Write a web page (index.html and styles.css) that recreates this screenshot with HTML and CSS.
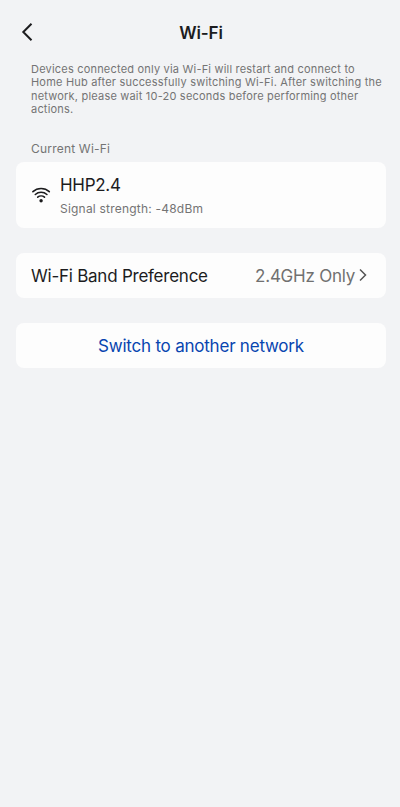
FILE: index.html
```html
<!DOCTYPE html>
<html lang="en">
<head>
<meta charset="utf-8">
<title>Wi-Fi</title>
<link rel="stylesheet" href="styles.css">
</head>
<body>
<header class="bar">
  <svg class="back" width="14" height="20" viewBox="0 0 14 20"><path d="M10.5 1.8 2.3 10l8.2 8.2"/></svg>
  <h1 class="title">Wi-Fi</h1>
</header>
<main class="content">
  <p class="intro"><span>Devices connected only via Wi-Fi will restart and connect to</span><br><span>Home Hub after successfully switching Wi-Fi. After switching the</span><br><span>network, please wait 10-20 seconds before performing other</span><br><span>actions.</span></p>
  <h2 class="label">Current Wi-Fi</h2>
  <section class="card network">
    <svg class="wifi" width="20" height="16" viewBox="0 0 20 16"><path d="M1.9 4.7C6.5.4 13.7.4 18.3 4.7M4.3 7.5c3.3-3 8.3-3 11.6 0M6.7 10.2c1.9-1.7 4.9-1.7 6.8 0"/><circle cx="10.1" cy="13.7" r="1.7"/></svg>
    <div class="info">
      <div class="name">HHP2.4</div>
      <div class="signal">Signal strength: -48dBm</div>
    </div>
  </section>
  <section class="card row">
    <span class="row-label">Wi-Fi Band Preference</span>
    <span class="value">2.4GHz Only</span>
    <svg class="chevron" width="8" height="14" viewBox="0 0 8 14"><path d="m1 1.5 5.5 5.5L1 12.5"/></svg>
  </section>
  <button class="card switch">Switch to another network</button>
</main>
</body>
</html>
```
FILE: styles.css
```css
* { box-sizing: border-box; }
body {
  margin: 0;
  min-height: 807px;
  background: #f2f3f5;
  color: #1c1c1e;
  font-family: Inter, "Liberation Sans", sans-serif;
}
svg { fill: none; stroke: currentColor; flex: none; }
.bar {
  display: grid;
  grid-template-columns: 40px 1fr 40px;
  align-items: center;
  height: 62px;
  padding-top: 2px;
}
.back { margin-left: 21px; stroke-width: 2; }
.title { margin: 2px 0 0 2px; text-align: center; font-size: 17px; font-weight: 570; letter-spacing: -0.1px; }
.content { padding: 0 14px 0 16px; }
.intro { margin: 0 0 0 15px; padding-top: 1px; color: #747474; font-size: 11px; line-height: 13.3px; white-space: nowrap; letter-spacing: 0.2px; }
.label { margin: 25px 0 5px 15px; color: #747474; font-size: 12px; line-height: 16px; font-weight: 400; letter-spacing: 0.2px; }
.card { display: flex; width: 370px; background: #fdfdfd; border-radius: 8px; }
.network { height: 66px; padding: 12px 15px; }
.wifi { margin: 13px 9px 0 0; stroke-width: 1.6; stroke-linecap: round; }
.wifi circle { fill: currentColor; stroke: none; }
.name { font-size: 17px; line-height: 22px; letter-spacing: -0.3px; font-weight: 370; }
.signal { margin-top: 5px; color: #747474; font-size: 12px; line-height: 16px; letter-spacing: 0.21px; }
.row { height: 45px; margin-top: 25px; padding: 1px 19px 0 15px; align-items: center; font-size: 17px; letter-spacing: -0.24px; font-weight: 370; }
.value { margin: 0 4px 0 auto; color: #707070; }
.chevron { margin-bottom: 2px; color: #555; stroke-width: 1.5; }
.switch { height: 45px; margin-top: 25px; border: 0; padding: 1px 0 0; align-items: center; justify-content: center; color: #0845b0; font: 370 17px Inter, sans-serif; letter-spacing: -0.22px; }
```
